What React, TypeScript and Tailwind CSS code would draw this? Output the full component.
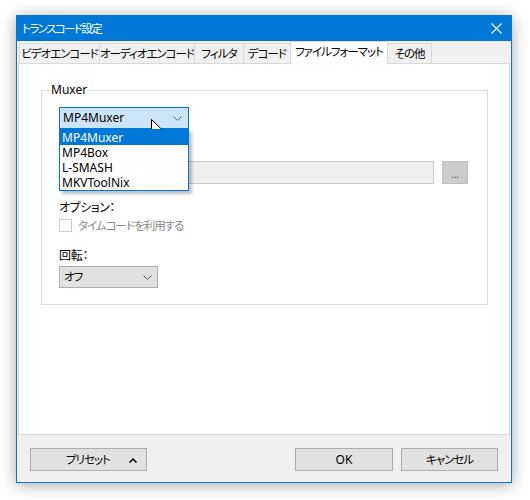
import { useState } from 'react';

const FONT = '"Segoe UI", "Noto Sans", "Noto Sans CJK JP", sans-serif';

const tabs = [
  { label: 'ビデオエンコード', w: 'w-[81px]' },
  { label: 'オーディオエンコード', w: 'w-[96px]' },
  { label: 'フィルタ', w: 'w-[50px]' },
  { label: 'デコード', w: 'w-[48px]' },
  { label: 'ファイルフォーマット', w: 'w-[98px]' },
  { label: 'その他', w: 'w-[45px]' },
];

const muxers = ['MP4Muxer', 'MP4Box', 'L-SMASH', 'MKVToolNix'];

// Japanese UI text is narrower in the original font
const jp = 'text-[11.5px] tracking-[-1px]';

function Chevron({ className = '' }: { className?: string }) {
  return (
    <svg width="9" height="5" viewBox="0 0 9 5" className={className}>
      <polyline points="0.5,0.5 4.5,4.5 8.5,0.5" fill="none" stroke="#606060" strokeWidth="1" />
    </svg>
  );
}

function Cursor() {
  return (
    <svg width="13" height="20" viewBox="0 0 13 20" className="absolute left-[151px] top-[119px]">
      <path
        d="M0.5 0.5 L0.5 16.5 L4.5 12.8 L7.2 19 L9.6 18 L7 11.8 L12.2 11.8 Z"
        fill="#fff"
        stroke="#000"
        strokeWidth="1"
        strokeLinejoin="miter"
      />
    </svg>
  );
}

export default function App() {
  const [activeTab] = useState(4);
  const [selected] = useState(0);

  return (
    <div
      className="relative w-[530px] h-[500px] bg-white overflow-hidden text-[12px] text-black whitespace-nowrap [font-feature-settings:'palt']"
      style={{ fontFamily: FONT }}
    >
      <div className="absolute left-[16px] top-[15px] w-[496px] h-[468px] border border-[#0078d7] bg-[#f0f0f0] flex flex-col shadow-[0_2px_14px_rgba(0,0,0,0.35)]">
        {/* Title bar */}
        <div className="h-[25px] bg-[#0078d7] flex items-center justify-between pl-[5px] pr-[9px] text-white">
          <span className="text-[11.5px] tracking-[-1.6px]">トランスコード設定</span>
          <svg width="11" height="11" viewBox="0 0 11 11">
            <path d="M0.5 0.5 L10.5 10.5 M10.5 0.5 L0.5 10.5" stroke="#fff" strokeWidth="1.1" />
          </svg>
        </div>

        {/* Tabs */}
        <div className="h-[22px] flex items-end pl-[2px] relative z-10">
          {tabs.map((t, i) =>
            i === activeTab ? (
              <div
                key={t.label}
                className={`${t.w} ${jp} h-[23px] -mb-px -ml-px bg-white border border-b-0 border-[#d9d9d9] flex items-center justify-center pb-[2px]`}
              >
                {t.label}
              </div>
            ) : (
              <div
                key={t.label}
                className={`${t.w} ${jp} h-[20px] ${i > 0 ? '-ml-px' : ''} bg-[#f0f0f0] border border-b-0 border-[#d9d9d9] flex items-center justify-center`}
              >
                {t.label}
              </div>
            )
          )}
        </div>

        {/* Panel */}
        <div className="mx-[1px] h-[372px] bg-white border border-[#d9d9d9] pt-[26px] pl-[22px] pr-[21px]">
          <div className="relative h-[215px] border border-[#dcdcdc] pl-[17px] pt-[16px]">
            <span className="absolute left-[8px] -top-[9px] bg-white px-[1px] leading-[16px]">Muxer</span>

            {/* Muxer combo */}
            <div className="relative w-[130px] h-[22px]">
              <div className="h-full border border-[#0078d7] bg-[#cce4f7] flex items-center justify-between pl-[3px] pr-[6px]">
                <span>MP4Muxer</span>
                <Chevron />
              </div>
              <div className="absolute left-0 top-full w-[130px] border border-[#0078d7] bg-white z-20 shadow-[3px_3px_3px_rgba(0,0,0,0.25)]">
                {muxers.map((m, i) => (
                  <div
                    key={m}
                    className={`h-[15px] leading-[15px] pl-[2px] ${i === selected ? 'bg-[#0078d7] text-white' : ''}`}
                  >
                    {m}
                  </div>
                ))}
              </div>
            </div>

            {/* Path field */}
            <div className="mt-[32px] flex items-center">
              <div className="w-[375px] h-[23px] border border-[#cccccc] bg-[#efefef]" />
              <div className="ml-[8px] w-[26px] h-[23px] border border-[#bfbfbf] bg-[#cccccc] flex items-center justify-center text-[10px] text-[#555] leading-none pt-[2px]">
                ...
              </div>
            </div>

            <div className="mt-[16px] h-[15px] leading-[15px] text-[12px] tracking-[-0.5px]">オプション：</div>
            <div className="mt-[2px] h-[17px] flex items-center">
              <div className="w-[13px] h-[13px] border border-[#cccccc] bg-white" />
              <span className={`ml-[6px] text-[#8a8a8a] ${jp}`}>タイムコードを利用する</span>
            </div>

            <div className="mt-[14px] h-[15px] leading-[15px] text-[12px] tracking-[-0.3px]">回転：</div>
            <div className="mt-[3px] w-[99px] h-[22px] border border-[#adadad] bg-[#e1e1e1] flex items-center justify-between pl-[4px] pr-[5px]">
              <span className={jp}>オフ</span>
              <Chevron />
            </div>
          </div>
        </div>

        {/* Footer */}
        <div className="flex-1 flex items-start pt-[13px] px-[13px]">
          <div className="w-[117px] h-[23px] border border-[#adadad] bg-[#e1e1e1] flex items-center relative">
            <span className={`ml-[35px] ${jp}`}>プリセット</span>
            <svg width="8" height="5" viewBox="0 0 8 5" className="absolute right-[9px] top-[9px]">
              <polyline points="0.5,4.5 4,1 7.5,4.5" fill="none" stroke="#000" strokeWidth="1.5" />
            </svg>
          </div>
          <div className="ml-auto w-[98px] h-[23px] border border-[#adadad] bg-[#e1e1e1] flex items-center justify-center">
            OK
          </div>
          <div className={`ml-[8px] w-[97px] h-[23px] border border-[#adadad] bg-[#e1e1e1] flex items-center justify-center ${jp}`}>
            キャンセル
          </div>
        </div>
      </div>
      <Cursor />
    </div>
  );
}
